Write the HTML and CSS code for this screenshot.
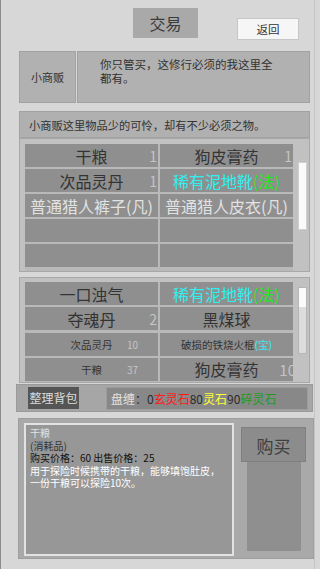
FILE: index.html
```html
<!DOCTYPE html>
<html lang="zh">
<head>
    <meta charset="UTF-8">
    <meta name="viewport" content="width=device-width, initial-scale=1.0">
    <title>交易</title>
    <link rel="stylesheet" href="styles.css">
</head>
<body>

    <div class="page">
        <div class="top">
            <div class="title">交易</div>
            <div class="back">返回</div>
        </div>

        <div class="npc">
            <div class="npc-name">小商贩</div>
            <div class="npc-say">你只管买，这修行必须的我这里全都有。</div>
        </div>

        <div class="hint">小商贩这里物品少的可怜，却有不少必须之物。</div>

        <!-- shop goods -->
        <div class="panel shop">
            <div class="grid">
                <div class="cell"><span class="name dark">干粮</span><span class="num">1</span></div>
                <div class="cell"><span class="name dark">狗皮膏药</span><span class="num">1</span></div>
                <div class="cell"><span class="name dark">次品灵丹</span><span class="num">1</span></div>
                <div class="cell"><span class="name cyan">稀有泥地靴<em class="green">(法)</em></span></div>
                <div class="cell"><span class="name light">普通猎人裤子(凡)</span></div>
                <div class="cell"><span class="name light">普通猎人皮衣(凡)</span></div>
                <div class="cell"></div>
                <div class="cell"></div>
                <div class="cell"></div>
                <div class="cell"></div>
            </div>
            <div class="scroll shop-scroll"></div>
        </div>

        <!-- bag -->
        <div class="panel bag">
            <div class="grid">
                <div class="cell"><span class="name dark">一口浊气</span></div>
                <div class="cell"><span class="name cyan">稀有泥地靴<em class="green">(法)</em></span></div>
                <div class="cell"><span class="name dark">夺魂丹</span><span class="num">2</span></div>
                <div class="cell"><span class="name dark">黑煤球</span></div>
                <div class="cell small"><span class="name dark">次品灵丹</span><span class="num">10</span></div>
                <div class="cell small"><span class="name dark">破损的铁烧火棍<em class="cyan">(宝)</em></span></div>
                <div class="cell small"><span class="name dark">干粮</span><span class="num">37</span></div>
                <div class="cell"><span class="name dark">狗皮膏药</span><span class="num">10</span></div>
            </div>
            <div class="scroll bag-scroll"><div class="thumb"></div></div>
        </div>

        <div class="bar">
            <div class="sort-btn">整理背包</div>
            <div class="money">
                <span class="light">盘缠</span>：0<span class="red">玄灵石</span>80<span class="yellow">灵石</span>90<span class="green2">碎灵石</span>
            </div>
        </div>

        <div class="detail">
            <div class="desc">
                <div class="light">干粮</div>
                <div class="dark">(消耗品)</div>
                <div class="price">购买价格：60 出售价格：25</div>
                <div class="white">用于探险时候携带的干粮，能够填饱肚皮，一份干粮可以探险10次。</div>
            </div>
            <div class="buy-col">
                <div class="buy-btn">购买</div>
                <div class="buy-base"></div>
            </div>
        </div>
    </div>

</body>
</html>
```

FILE: styles.css
```css
body {
    margin: 0;
    padding: 0;
    background-color: #d7d7d7;
    font-family: "Noto Sans CJK SC", "Noto Sans", sans-serif;
    color: #333;
}
.page {
    width: 313px;
    height: 569px;
    border-left: 1px solid #8c8c8c;
    border-right: 1px solid #c4c4c4;
    box-sizing: content-box;
}
.top {
    display: flex;
    align-items: flex-start;
    height: 51px;
    padding-top: 8px;
    box-sizing: border-box;
}
.title {
    margin-left: 132px;
    width: 65px;
    height: 30px;
    line-height: 30px;
    text-align: center;
    font-size: 16px;
    background-color: #a9a9a9;
    color: #3a3a3a;
}
.back {
    margin-left: 39px;
    margin-top: 10px;
    width: 60px;
    height: 20px;
    line-height: 20px;
    text-align: center;
    font-size: 11.5px;
    background-color: #f6f6f6;
    border: 1px solid #c6c6c6;
    color: #333;
}
.npc {
    display: flex;
    gap: 1px;
    margin-left: 18px;
    width: 291px;
    height: 52px;
}
.npc-name {
    width: 55px;
    display: flex;
    align-items: center;
    justify-content: center;
    font-size: 11px;
    background-color: #b1b1b1;
    border: 1px solid #a2a2a2;
}
.npc-say {
    flex: 1;
    padding: 5px 30px 0 22px;
    font-size: 11.5px;
    line-height: 14px;
    background-color: #b1b1b1;
    border: 1px solid #a2a2a2;
}
.hint {
    margin: 8px 0 0 18px;
    width: 291px;
    height: 27px;
    box-sizing: border-box;
    padding: 5px 0 0 9px;
    font-size: 11.25px;
    background-color: #b0b0b0;
    border: 1px solid #a2a2a2;
}
.panel {
    display: flex;
    margin-left: 18px;
    width: 291px;
    box-sizing: border-box;
    background-color: #c1c1c1;
    border: 1px solid #a8a8a8;
}
.shop {
    height: 134px;
    padding: 5px 0 0 5px;
}
.bag {
    margin-top: 5px;
    height: 106px;
    padding: 4px 0 0 5px;
}
.grid {
    display: grid;
    grid-template-columns: 133px 133px;
    grid-auto-rows: 23px;
    gap: 2px 2px;
    background-color: #b9b9b9;
    align-content: start;
}
.bag .grid {
    row-gap: 2.3px;
}
.cell {
    position: relative;
    display: flex;
    align-items: center;
    justify-content: center;
    background-color: #8f8f8f;
    font-size: 16px;
    white-space: nowrap;
    overflow: hidden;
}
.cell.small {
    font-size: 10.5px;
}
.name em {
    font-style: normal;
}
.num {
    position: absolute;
    right: 1px;
    top: 50%;
    transform: translateY(-50%);
    font-size: 14px;
    color: #c4c4c4;
}
.cell.small .num {
    right: 20px;
    font-size: 10px;
}
.bag .cell:last-child .num {
    right: -3px;
    font-size: 15px;
}
.dark { color: #333; }
.light { color: #e2e2e2; }
.cyan { color: #2ff0f0; }
.green { color: #1ee81e; }
.red { color: #ff1a1a; }
.yellow { color: #ffff33; }
.green2 { color: #1f9a1f; }
.white { color: #ffffff; }
.scroll {
    margin-left: 5px;
    width: 9px;
    box-sizing: border-box;
}
.shop-scroll {
    margin-top: 18px;
    height: 68px;
    background-color: #fafafa;
    border: 1px solid #cfcfcf;
}
.bag-scroll {
    margin-top: 5px;
    height: 67px;
    background-color: #dcdcdc;
    border: 1px solid #b5b5b5;
}
.thumb {
    height: 19px;
    background-color: #fafafa;
}
.bar {
    display: flex;
    align-items: center;
    margin: 1px 0 0 15px;
    width: 297px;
    height: 28px;
    box-sizing: border-box;
    padding-left: 11px;
    background-color: #a6a6a6;
    border: 1px solid #9a9a9a;
}
.sort-btn {
    width: 51px;
    height: 22px;
    line-height: 22px;
    text-align: center;
    font-size: 12px;
    background-color: #555555;
    color: #dcdcdc;
}
.money {
    margin-left: 27px;
    width: 202px;
    height: 23px;
    line-height: 22px;
    box-sizing: border-box;
    padding-left: 4px;
    font-size: 12px;
    background-color: #888888;
    border: 1px solid #9c9c9c;
    color: #2a2a2a;
}
.detail {
    display: flex;
    margin: 6px 0 0 17px;
    width: 296px;
    height: 141px;
    box-sizing: border-box;
    padding: 4px 0 0 5px;
    background-color: #a9a9a9;
    border: 1px solid #9e9e9e;
}
.desc {
    width: 210px;
    height: 133px;
    box-sizing: border-box;
    padding: 2px 10px 0 4px;
    font-size: 10px;
    line-height: 12.5px;
    background-color: #979797;
    border: 2px solid #e2e2e2;
}
.price {
    color: #111;
}
.buy-col {
    display: flex;
    flex-direction: column;
    align-items: center;
    margin: 4px 0 0 7px;
    width: 65px;
}
.buy-btn {
    width: 65px;
    height: 35px;
    line-height: 35px;
    text-align: center;
    font-size: 17px;
    color: #404040;
    background-color: #8c8c8c;
    border: 1px solid #7f7f7f;
    box-sizing: border-box;
}
.buy-base {
    width: 54px;
    height: 89px;
    background-color: #8f8f8f;
}
```
